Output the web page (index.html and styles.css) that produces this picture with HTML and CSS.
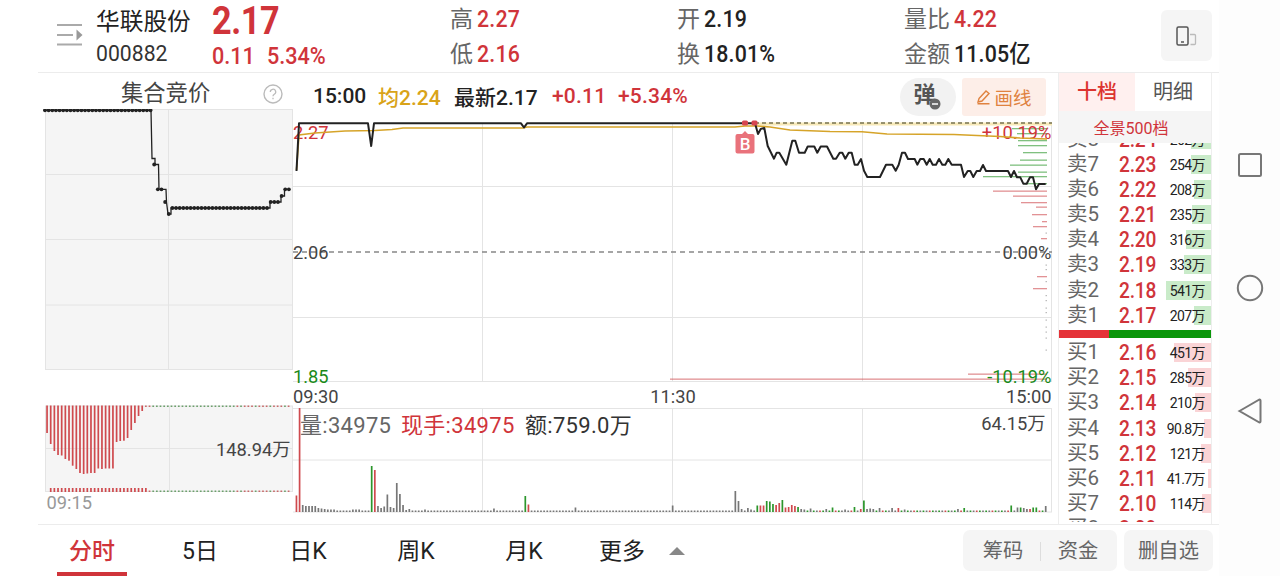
FILE: index.html
```html
<!DOCTYPE html>
<html lang="zh-CN">
<head>
  <meta charset="utf-8">
  <title>华联股份 000882</title>
  <link rel="stylesheet" href="styles.css">
</head>
<body>

<div class="app">
  <div class="screen">

    <header class="quote">
      <svg class="menu-icon" width="26" height="24" viewBox="0 0 26 24">
        <path d="M0 2h25M0 12h16M0 21.500h25" stroke="#aaa" stroke-width="2" fill="none"/>
        <path d="M19.500 6.500v11l6-5.500z" fill="#999"/>
      </svg>
      <div class="stock">
        <div class="stock-name">华联股份</div>
        <div class="stock-code">000882</div>
      </div>
      <div class="price red">
        <div class="price-now">2.17</div>
        <div class="price-diff"><span>0.11</span><span>5.34%</span></div>
      </div>
      <div class="stat">
        <div><label>高</label><b class="red">2.27</b></div>
        <div><label>低</label><b class="red">2.16</b></div>
      </div>
      <div class="stat">
        <div><label>开</label><b>2.19</b></div>
        <div><label>换</label><b>18.01%</b></div>
      </div>
      <div class="stat">
        <div><label>量比</label><b class="red">4.22</b></div>
        <div><label>金额</label><b>11.05亿</b></div>
      </div>
      <button class="rotate-btn">
        <svg width="22" height="22" viewBox="0 0 22 22" fill="none">
          <rect x="1" y="2" width="11" height="18" rx="1.500" stroke="#555" stroke-width="1.500"/>
          <path d="M5 17h3" stroke="#555" stroke-width="1.500"/>
          <path d="M14 9.500h4.500a1 1 0 0 1 1 1v8a1 1 0 0 1-1 1h-4" stroke="#bbb" stroke-width="1.300"/>
        </svg>
      </button>
    </header>

    <main class="content">
      <section class="auction">
        <div class="auction-title">
          <span>集合竞价</span>
          <svg width="20" height="20" viewBox="0 0 20 20" fill="none" stroke="#bbb">
            <circle cx="10" cy="10" r="9" stroke-width="1.400"/>
            <path d="M7.300 8a2.700 2.700 0 1 1 4 2.300c-1 .6-1.300 1-1.300 2M10 13.800v1.400" stroke-width="1.300"/>
          </svg>
        </div>
        <svg class="auction-chart" width="255" height="405" viewBox="38 109 255 405">
          <rect x="45.500" y="109.500" width="247" height="260" class="panel"/>
          <path class="grid" d="M45 174.500h248M45 239.500h248M45 305h248M168.500 110v260"/>
          <path class="line" id="auction-line" d="M45 110.300H151L152 158.500H155V164.500H158.500L159 189.300H166L166.500 202L168 214H171V208H270V202H281V196H284.500V189.300H290"/>
          <g id="auction-dots" class="dots"></g>
          <rect x="45.500" y="406" width="247" height="85.500" class="panel"/>
          <path class="grid" d="M45 448.500h248M169.500 406v85"/>
          <g id="auction-volume"></g>
          <text x="290.500" y="455.500" class="label" text-anchor="end">148.94万</text>
          <text x="46.500" y="509" class="label muted">09:15</text>
        </svg>
      </section>

      <section class="intraday">
        <div class="legend">
          <span>15:00</span>
          <span class="avg">均2.24</span>
          <span>最新2.17</span>
          <span class="red">+0.11</span>
          <span class="red">+5.34%</span>
          <button class="danmu">弹
            <svg width="12" height="12" viewBox="0 0 12 12">
              <circle cx="6" cy="6" r="5.500" fill="#666"/>
              <path d="M3 6h6" stroke="#fff" stroke-width="1.500"/>
            </svg>
          </button>
          <button class="draw-btn">
            <svg width="16" height="16" viewBox="0 0 16 16" fill="none" stroke="#e0823f" stroke-width="1.400">
              <path d="M3 9.500L10 2l3 2.500-7 7.500-4 1zM1.500 14.700h12"/>
            </svg>画线
          </button>
        </div>
        <svg class="intraday-chart" width="760" height="394" viewBox="293 120 760 394">
          <path class="grid" d="M293 186.500h759M293 317.500h759M293 381.500h759M482.500 123v258M672.500 123v258M862.500 123v258M1051.500 123v258"/>
          <path class="grid" d="M293 408.500h759M293 460h759M293 512h759M482.500 408v104M672.500 408v104M862.500 408v104M1051.500 408v104"/>
          <path d="M293 252H1052" stroke="#888" stroke-width="1.500" stroke-dasharray="5 4"/>
          <path d="M755 124H1052" stroke="#f7e9b8" stroke-width="3"/>
          <path d="M755 123H1052" stroke="#77714f" stroke-width="1.300" stroke-dasharray="4 3"/>
          <g id="depth"></g>
          <text x="293" y="138.500" class="label up">2.27</text>
          <text x="1051.500" y="138.500" class="label up" text-anchor="end">+10.19%</text>
          <path class="avg-line" d="M296.500 170L299 135L315 133L345 131L375 130.500L392 129.500L403 128H523L527 127H735L745 126H757L770 127L790 130L830 131.500L862 131.700L887 134L954 134.500L1000 136.500L1020 138L1047 139"/>
          <path class="line price-line" d="M296.500 171L299 123.300H368L371.200 146L374 123.300H521L524 127.500L527 123.300H755L758 134L760.700 129L764.300 128L767.700 146L774 158.700L776.700 152.700H779.300L786.300 164.700L792.300 140.700H795.300L799 152.700H804.700L807.700 146.500H814.300L817.300 152.700L820.700 146.500H827L833.300 158.700H836L839.700 152.700H842.300L845.300 158.700L848.700 152.700H851.700L854.700 164.700H857.700L861 159L864 170.700L867.300 177H880L886 164.700H892.300L895.700 170.700L898.700 164.700L902 152.700H905L908 159H914.700L917.300 164.700L920.300 159H923.700L926.700 164.700L929.700 159L932.700 164.700H936L939 159L942.300 164.700H945.300L948.300 159L951.700 164.700H961L964 177L967.700 171H970.300L973.300 177L976.700 171H980L983 165L986 171H1008L1011 177L1014 171L1017 177.300H1020.300L1023.300 183.700H1026.700L1030 177.300H1033L1036 189.300L1039 184H1045.700"/>
          <rect x="742" y="120.500" width="6" height="5" rx="1.500" fill="#d64550"/>
          <rect x="751.500" y="120.500" width="6" height="5" rx="1.500" fill="#d64550"/>
          <path d="M737.500 134h4.500l3-3 3 3h4.500a2 2 0 0 1 2 2v15.500a2 2 0 0 1-2 2h-15a2 2 0 0 1-2-2V136a2 2 0 0 1 2-2z" fill="#e9727b"/>
          <text x="745" y="150" class="buy-mark" text-anchor="middle">B</text>
          <text x="293" y="258.500" class="label">2.06</text>
          <text x="1051.500" y="258.500" class="label" text-anchor="end">0.00%</text>
          <text x="293" y="383" class="label down">1.85</text>
          <text x="1051.500" y="383" class="label down" text-anchor="end">-10.19%</text>
          <text x="293" y="402.500" class="label">09:30</text>
          <text x="673" y="402.500" class="label" text-anchor="middle">11:30</text>
          <text x="1051.500" y="402.500" class="label" text-anchor="end">15:00</text>
          <g id="volume"></g>
          <text x="300" y="432.700" class="vol-text gray">量:34975</text>
          <text x="401" y="432.700" class="vol-text up">现手:34975</text>
          <text x="525" y="432.700" class="vol-text">额:759.0万</text>
          <text x="1045.500" y="430" class="label" text-anchor="end">64.15万</text>
        </svg>
      </section>

      <aside class="book">
        <div class="book-tabs">
          <div class="active">十档</div>
          <div>明细</div>
        </div>
        <div class="book-all">全景500档</div>
        <div class="asks">
          <div class="row"><span>卖8</span><b>2.24</b><em>262万</em><i style="width:20px"></i></div>
          <div class="row"><span>卖7</span><b>2.23</b><em>254万</em><i style="width:20px"></i></div>
          <div class="row"><span>卖6</span><b>2.22</b><em>208万</em><i style="width:17px"></i></div>
          <div class="row"><span>卖5</span><b>2.21</b><em>235万</em><i style="width:19px"></i></div>
          <div class="row"><span>卖4</span><b>2.20</b><em>316万</em><i style="width:25px"></i></div>
          <div class="row"><span>卖3</span><b>2.19</b><em>333万</em><i style="width:27px"></i></div>
          <div class="row"><span>卖2</span><b>2.18</b><em>541万</em><i style="width:45px"></i></div>
          <div class="row"><span>卖1</span><b>2.17</b><em>207万</em><i style="width:17px"></i></div>
        </div>
        <div class="ratio"><div style="width:50px"></div></div>
        <div class="bids">
          <div class="row"><span>买1</span><b>2.16</b><em>451万</em><i style="width:37px"></i></div>
          <div class="row"><span>买2</span><b>2.15</b><em>285万</em><i style="width:23px"></i></div>
          <div class="row"><span>买3</span><b>2.14</b><em>210万</em><i style="width:16px"></i></div>
          <div class="row"><span>买4</span><b>2.13</b><em>90.8万</em><i style="width:7px"></i></div>
          <div class="row"><span>买5</span><b>2.12</b><em>121万</em><i style="width:10px"></i></div>
          <div class="row"><span>买6</span><b>2.11</b><em>41.7万</em><i style="width:3px"></i></div>
          <div class="row"><span>买7</span><b>2.10</b><em>114万</em><i style="width:9px"></i></div>
          <div class="row"><span>买8</span><b>2.09</b></div>
        </div>
      </aside>
    </main>

    <footer class="footer">
      <nav class="periods">
        <a class="active">分时</a>
        <a>5日</a>
        <a>日K</a>
        <a>周K</a>
        <a>月K</a>
        <a class="more">更多</a>
      </nav>
      <div class="actions">
        <div class="action-group"><span>筹码</span><span>资金</span></div>
        <div class="action-single">删自选</div>
      </div>
    </footer>
  </div>

  <div class="system-nav">
    <svg width="26" height="26" viewBox="0 0 26 26"><rect x="2" y="2" width="22" height="22" rx="1.500"/></svg>
    <svg width="28" height="28" viewBox="0 0 28 28"><circle cx="14" cy="14" r="12.200"/></svg>
    <svg width="26" height="28" viewBox="0 0 26 28"><path d="M2.500 14L22.500 2.500q1 0 1 1v21q0 1-1 1z"/></svg>
  </div>
</div>

<script src="chart.js"></script>
</body>
</html>
```

FILE: styles.css
```css
:root {
  --red: #d0343a;
  --green: #1a8a1a;
  --text: #222;
  --gray: #666;
  --panel: #f5f5f5;
  --line: #e4e4e4;
}

* {
  box-sizing: border-box;
}

body {
  margin: 0;
  font-family: Roboto, "Noto Sans CJK SC", sans-serif;
  color: var(--text);
  background: #fff;
  overflow: hidden;
}

button {
  border: none;
  padding: 0;
  font-family: inherit;
}

.red {
  color: var(--red);
}

.app {
  display: flex;
  width: 1280px;
  height: 576px;
}

.screen {
  width: 1219px;
  padding-left: 38px;
  display: flex;
  flex-direction: column;
}

/* header */
.quote {
  height: 73px;
  display: grid;
  grid-template-columns: 39px 116px 238px 227px 227px 257px 51px;
  padding-left: 19px;
  border-bottom: 1px solid #ececec;
  white-space: nowrap;
}

.menu-icon {
  margin-top: 23px;
}

.stock-name {
  font-size: 23.7px;
  line-height: 34px;
  margin-top: 5px;
}

.stock-code {
  font-size: 21.2px;
  line-height: 30px;
  color: #333;
}

/* condensed digits */
.price-now,
.price-diff span,
.stat b,
.row b {
  transform: scaleX(0.9);
  transform-origin: left;
}

.price-now {
  font-size: 38px;
  font-weight: 700;
  letter-spacing: -0.4px;
  line-height: 40px;
  margin-top: 1px;
}

.price-diff {
  display: grid;
  grid-template-columns: 55px auto;
  font-size: 24px;
  font-weight: 500;
  line-height: 31px;
}

.stat {
  padding-top: 2px;
}

.stat div {
  display: flex;
  gap: 4px;
  height: 35px;
  line-height: 35px;
  font-size: 23.7px;
}

.stat label {
  color: var(--gray);
  font-size: 23px;
}

.stat b {
  font-weight: 500;
  letter-spacing: 0.2px;
}

.rotate-btn {
  width: 51px;
  height: 51px;
  margin-top: 10px;
  border-radius: 6px;
  background: var(--panel);
  display: flex;
  align-items: center;
  justify-content: center;
}

/* charts */
.content {
  display: flex;
  height: 451px;
}

.auction {
  width: 255px;
}

.auction-title {
  height: 36px;
  display: flex;
  align-items: center;
  justify-content: space-between;
  padding: 5px 10px 0 83px;
  font-size: 22.3px;
  color: #444;
}

.auction-title span {
  margin-top: -5px;
}

.auction-chart,
.intraday-chart {
  display: block;
}

.intraday {
  width: 760px;
}

.legend {
  height: 47px;
  display: grid;
  grid-template-columns: 65px 76px 98px 66px 282px 62px 84px;
  align-items: center;
  padding: 2px 0 0 20px;
  font-size: 21px;
  font-weight: 500;
  white-space: nowrap;
}

.legend span {
  margin-top: -3px;
}

.legend .red {
  letter-spacing: 0.2px;
}

.legend .avg {
  color: #d9a318;
}

.danmu {
  width: 56px;
  height: 38px;
  margin-top: -1px;
  border-radius: 19px;
  background: #f2f2f2;
  font-size: 22px;
  line-height: 34px;
  font-weight: 700;
  color: #555;
  position: relative;
  padding: 0 7px 4px 0;
}

.danmu svg {
  position: absolute;
  left: 29px;
  top: 20px;
}

.draw-btn {
  height: 38px;
  margin-top: -1px;
  border-radius: 3px;
  background: #fdeee8;
  color: #e0823f;
  font-size: 18.5px;
  display: flex;
  align-items: center;
  justify-content: center;
  gap: 2px;
}

.panel {
  fill: var(--panel);
  stroke: var(--line);
}

.grid {
  stroke: var(--line);
  fill: none;
}

.line {
  stroke: #222;
  stroke-width: 1.3;
  fill: none;
}

.price-line {
  stroke-width: 2;
  stroke-linejoin: round;
}

.avg-line {
  stroke: #d6a429;
  stroke-width: 1.6;
  fill: none;
}

.dots {
  fill: #222;
}

.label {
  font-size: 18.3px;
  fill: #444;
}

.vol-text {
  font-size: 22px;
  letter-spacing: 0.3px;
  fill: #333;
}

.muted {
  fill: #999;
}

.gray {
  fill: var(--gray);
}

.up {
  fill: var(--red);
}

.down {
  fill: var(--green);
}

.buy-mark {
  font-size: 17px;
  font-weight: 500;
  fill: #fff;
}

/* order book */
.book {
  width: 154px;
  margin-left: 5px;
  border-left: 1px solid #eee;
  border-right: 1px solid #eee;
}

.book-tabs {
  display: flex;
  height: 38px;
  line-height: 38px;
  font-size: 20px;
  text-align: center;
}

.book-tabs div {
  flex: 1;
  color: #555;
}

.book-tabs .active {
  background: #fff0ef;
  color: #dc3430;
  font-weight: 500;
}

.book-all {
  height: 32px;
  line-height: 35px;
  background: var(--panel);
  text-align: center;
  font-size: 16px;
  color: var(--red);
  padding-right: 8px;
}

.asks {
  height: 187px;
  padding-bottom: 2px;
  overflow: hidden;
  display: flex;
  flex-direction: column;
  justify-content: flex-end;
}

.bids {
  height: 184px;
  padding-top: 2px;
  overflow: hidden;
}

.row {
  flex: none;
  height: 25.2px;
  line-height: 25.2px;
  display: grid;
  grid-template-columns: 52px 40px 52px 8px;
  padding-left: 8px;
  position: relative;
  white-space: nowrap;
}

.row span {
  font-size: 20.5px;
  color: var(--gray);
}

.row b {
  font-size: 21.3px;
  font-weight: 500;
  color: var(--red);
  letter-spacing: -0.2px;
}

.row em {
  font-style: normal;
  font-size: 14px;
  letter-spacing: -0.6px;
  text-align: right;
  line-height: 27px;
  padding-right: 6px;
  margin-left: -10px;
  z-index: 1;
}

/* volume bar behind the amount */
.row i {
  position: absolute;
  right: 0;
  top: 3px;
  height: 19px;
  background: #c9ebc9;
}

.bids .row i {
  background: #fad4d6;
}

.ratio {
  height: 8px;
  background: #0a960a;
}

.ratio div {
  height: 8px;
  background: #e53238;
}

/* footer */
.footer {
  height: 52px;
  border-top: 1px solid #ececec;
  display: flex;
  justify-content: space-between;
}

.periods {
  display: grid;
  grid-template-columns: 108px 108px 108px 108px 108px 108px;
  font-size: 23px;
  line-height: 54px;
}

.periods a {
  text-align: center;
}

.periods .active {
  width: 70px;
  margin-left: 19px;
  height: 51px;
  color: var(--red);
  font-weight: 500;
  border-bottom: 4px solid var(--red);
}

.periods .more {
  display: flex;
  align-items: center;
  gap: 24px;
  padding-left: 21px;
}

.periods .more::after {
  content: "";
  margin-top: -3px;
  border: 8px solid transparent;
  border-top: none;
  border-bottom: 8px solid #888;
}

.actions {
  display: flex;
  gap: 7px;
  padding: 5px 6px 0 0;
  font-size: 20.3px;
  line-height: 43px;
  color: var(--gray);
}

.action-group,
.action-single {
  height: 41px;
  border-radius: 7px;
  background: var(--panel);
  text-align: center;
}

.action-group {
  width: 154px;
  display: flex;
  align-items: center;
  padding: 1px 2px 0 3px;
}

.action-group span {
  flex: 1;
}

.action-group span + span {
  border-left: 1px solid #ddd;
  line-height: 19px;
}

.action-single {
  width: 89px;
}

/* phone navigation keys */
.system-nav {
  width: 61px;
  background: #fdfdfd;
  display: flex;
  flex-direction: column;
  align-items: center;
  padding-top: 152px;
  gap: 95.5px;
}

.system-nav svg {
  flex: none;
  fill: none;
  stroke: #777;
  stroke-width: 2;
}
```

FILE: chart.js
```js
const NS = "http://www.w3.org/2000/svg";
const RED = "#cf4a4e";
const GREEN = "#2c962c";
const GRAY = "#777";

function add(parent, tag, attrs) {
  const el = document.createElementNS(NS, tag);
  for (const key in attrs) el.setAttribute(key, attrs[key]);
  document.getElementById(parent).appendChild(el);
}

function bar(parent, x, y, width, height, fill) {
  add(parent, "rect", { x, y, width, height, fill });
}

// call auction: dots follow the stepped line
function auctionY(x) {
  if (x < 151) return 110.3;
  if (x < 154) return 158.5;
  if (x < 157) return 164.5;
  if (x < 165) return 189.3;
  if (x < 167) return 202;
  if (x < 170) return 214;
  if (x < 269) return 208;
  if (x < 280) return 202;
  if (x < 284) return 196;
  return 189.3;
}

for (let i = 0; i < 68; i++) {
  const x = 45 + i * 3.64;
  add("auction-dots", "circle", { cx: x, cy: auctionY(x), r: 1.9 });
}

const auctionEnds = [433, 444, 451, 455, 455.5, 459, 460.7, 465.7, 469, 473, 474, 473.5, 473, 473,
  468.5, 469, 468.5, 468.5, 468.5, 442, 441, 440.7, 438, 430, 423, 416, 411];

for (let i = 0; i < 67; i++) {
  const x = 46.2 + i * 3.66;
  const color = i > 28 && i < 52 || i % 4 === 1 ? "#6ca06c" : "#c86a6a";
  if (i < auctionEnds.length) {
    bar("auction-volume", x, 405.5, 1.7, auctionEnds[i] - 405.5, RED);
  } else {
    bar("auction-volume", x, 405.5, 1.7, 1.5, color);
  }
  if (i > 0 && i < 28) bar("auction-volume", x, 488, 1.7, 4, RED);
  else if (i >= 28) bar("auction-volume", x, 490.5, 1.7, 1.5, color);
}

// order depth at the right edge: [y, left x, color]
const depth = [
  [128.5, 1012, GREEN], [133.5, 1017, GREEN], [140.5, 1018, GREEN], [145.5, 1018, GREEN],
  [152.5, 1023, GREEN], [160, 1020, GREEN], [165, 1010, GREEN], [172, 1018, GREEN],
  [176.5, 983, GREEN], [183.5, 1025, GREEN],
  [191, 993, RED], [196, 1013, RED], [202.5, 1021, RED], [207, 1036, RED], [214.5, 1032, RED],
  [221.5, 1042, RED], [226.5, 1033, RED], [238.5, 1041, RED], [276.5, 1037, RED],
  [288.5, 1033, RED], [374, 968, RED], [379, 670, RED]
];
depth.forEach(([y, x, fill]) => {
  add("depth", "rect", { x, y: y - 0.5, width: 1047 - x, height: 1.3, fill, opacity: 0.6 });
});
[233, 265, 269.5, 281.5, 295.5, 300.5, 308, 312.5, 320, 327, 332, 338, 350].forEach(y => {
  bar("depth", 1045.5, y - 0.5, 1.5, 1.2, "#bbb");
});

// minute volume: index -> [height, color]
const spikes = {
  0: [16.5, RED], 1: [104, RED], 2: [7], 3: [6], 4: [6], 5: [6], 6: [6], 7: [4], 8: [3.5], 9: [3],
  10: [2.5], 11: [2.5], 12: [2.5], 18: [2.5], 19: [2.5], 20: [2.5],
  24: [46, GREEN], 25: [42, RED], 26: [6], 27: [4], 28: [5.5], 29: [17.5], 30: [5], 31: [4],
  32: [29], 33: [18], 34: [7], 35: [2], 36: [3], 41: [2.5], 63: [3.5],
  73: [16, GREEN], 74: [7.5, RED], 89: [4.5], 120: [6.5],
  140: [21], 141: [11], 142: [3], 144: [4], 145: [2.5],
  147: [6.5, GREEN], 148: [6.5, RED], 149: [6.5, RED], 150: [11, GREEN], 151: [10.5, GREEN],
  152: [8, GREEN], 153: [7, RED], 154: [9, RED], 155: [12, GREEN], 156: [4.5, RED],
  157: [5, RED], 158: [7, RED], 159: [6, RED], 160: [5, GREEN], 161: [3], 162: [2.5],
  164: [3.5], 169: [3], 171: [4.5, GREEN], 175: [2.5], 178: [5, GREEN], 180: [3, RED],
  181: [11.5, GREEN], 182: [3], 183: [3.5], 184: [3], 186: [4], 190: [4], 192: [4, RED],
  194: [2.5], 211: [3], 213: [4, GREEN], 228: [6.5, GREEN], 230: [4.5], 231: [4.5, GREEN],
  232: [4], 233: [3], 234: [3, RED], 235: [4.5, GREEN], 236: [4.5, GREEN], 239: [6]
};
for (let i = 0; i < 240; i++) {
  const late = i > 160 ? [GREEN, GRAY, RED, GREEN, GRAY][i % 5] : GRAY;
  const [h, color = GRAY] = spikes[i] || [1.5, late];
  bar("volume", 295.6 + i * 3.135, 512 - h, 1.7, h, color);
}
```
